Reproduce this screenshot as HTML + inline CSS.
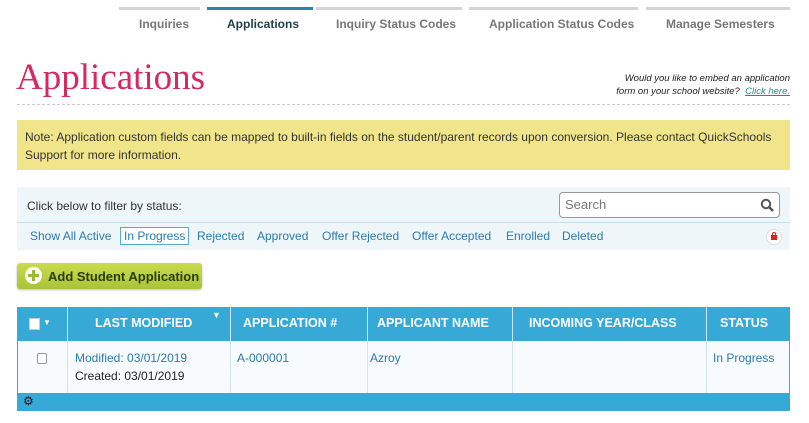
<!DOCTYPE html>
<html><head><style>
body{margin:0;width:809px;height:423px;background:#fff;font-family:"Liberation Sans",sans-serif;position:relative;overflow:hidden}
.a{position:absolute}
.tab{position:absolute;top:7px;height:3px;background:#d4d4d4}
.tt{position:absolute;top:17px;font-size:12px;color:#777;font-weight:bold}
.f{position:absolute;top:229px;font-size:12px;color:#2a7bad;white-space:nowrap}
</style></head><body>
<div class="tab" style="left:119px;width:81px"></div>
<div class="tab" style="left:207px;width:106px;background:#2a84a8"></div>
<div class="tab" style="left:316px;width:146px"></div>
<div class="tab" style="left:469px;width:169px"></div>
<div class="tab" style="left:646px;width:144px"></div>
<div class="tt" style="left:139px">Inquiries</div>
<div class="tt" style="left:227px;color:#1f3f4d">Applications</div>
<div class="tt" style="left:336px">Inquiry Status Codes</div>
<div class="tt" style="left:489px">Application Status Codes</div>
<div class="tt" style="left:666px">Manage Semesters</div>
<div class="a" style="left:16px;top:56px;font-family:'Liberation Serif',serif;font-size:37px;color:#d42a5e">Applications</div>
<div class="a" style="left:560px;top:72px;width:230px;text-align:right;font-size:9.5px;font-style:italic;color:#222;line-height:13px">Would you like to embed an application<br>form on your school website? &nbsp;<span style="color:#2a8a8a;text-decoration:underline">Click here.</span></div>
<div class="a" style="left:17px;top:104px;width:773px;border-top:1px dashed #ccc"></div>
<div class="a" style="left:17px;top:120px;width:757px;height:34px;padding:8px 8px;background:#f1e58c;font-size:12px;line-height:18px;color:#333">Note: Application custom fields can be mapped to built-in fields on the student/parent records upon conversion. Please contact QuickSchools Support for more information.</div>
<div class="a" style="left:17px;top:187px;width:773px;height:63px;background:#eef6fa"></div>
<div class="a" style="left:27px;top:199px;font-size:12px;color:#333">Click below to filter by status:</div>
<div class="a" style="left:559px;top:192px;width:219px;height:24px;border:1px solid #999;border-radius:4px;background:#fff"><span style="position:absolute;left:5px;top:4px;font-size:13px;color:#777">Search</span>
<svg style="position:absolute;right:5px;top:5px" width="14" height="14" viewBox="0 0 14 14"><circle cx="6" cy="6" r="4.2" fill="none" stroke="#555" stroke-width="2"/><path d="M9 9l4 4" stroke="#555" stroke-width="2.5"/></svg></div>
<div class="a" style="left:17px;top:222px;width:773px;border-top:1px solid #bfe0ee"></div>
<div class="f" style="left:30px">Show All Active</div>
<div class="f" style="left:120px;top:227px;border:1px solid #5aa9d4;padding:1px 3px;background:#fff">In Progress</div>
<div class="f" style="left:197px">Rejected</div>
<div class="f" style="left:257px">Approved</div>
<div class="f" style="left:322px">Offer Rejected</div>
<div class="f" style="left:412px">Offer Accepted</div>
<div class="f" style="left:506px">Enrolled</div>
<div class="f" style="left:562px">Deleted</div>
<div class="a" style="left:766px;top:229px;width:14px;height:14px;border-radius:50%;background:#fff;border:1px solid #ddd"><div class="a" style="left:4px;top:5px;width:6px;height:5px;background:#e02020"></div><div class="a" style="left:5px;top:2px;width:2px;height:3px;border:1px solid #e02020;border-bottom:0;border-radius:2px 2px 0 0"></div></div>
<div class="a" style="left:17px;top:263px;width:185px;height:26px;background:linear-gradient(#c8dc4a,#a9c43a);border-radius:3px;box-shadow:0 1px 2px #bbb"></div>
<div class="a" style="left:25px;top:267px;width:17px;height:17px;border-radius:50%;background:#fff"><div class="a" style="left:7px;top:3px;width:3px;height:11px;background:#9bba32"></div><div class="a" style="left:3px;top:7px;width:11px;height:3px;background:#9bba32"></div></div>
<div class="a" style="left:48px;top:269px;font-size:13px;font-weight:bold;color:#2c3a10">Add Student Application</div>
<div class="a" style="left:17px;top:307px;width:773px;height:104px;background:#36a9d6"></div>
<div class="a" style="left:18px;top:341px;width:771px;height:52px;background:#f7fbfd"></div>
<div class="a" style="left:67px;top:307px;height:86px;border-left:1px solid #cfe6f2"></div>
<div class="a" style="left:230px;top:307px;height:86px;border-left:1px solid #cfe6f2"></div>
<div class="a" style="left:367px;top:307px;height:86px;border-left:1px solid #cfe6f2"></div>
<div class="a" style="left:512px;top:307px;height:86px;border-left:1px solid #cfe6f2"></div>
<div class="a" style="left:706px;top:307px;height:86px;border-left:1px solid #cfe6f2"></div>
<div class="a" style="left:29px;top:318px;width:9px;height:10px;background:#fff;border:1px solid #ccc"></div>
<div class="a" style="left:43px;top:318px;color:#fff;font-size:8px">▼</div>
<div class="a" style="left:95px;top:316px;color:#fff;font-weight:bold;font-size:12.5px">LAST MODIFIED</div>
<div class="a" style="left:212px;top:310px;color:#fff;font-size:9px">▼</div>
<div class="a" style="left:243px;top:316px;color:#fff;font-weight:bold;font-size:12.5px">APPLICATION #</div>
<div class="a" style="left:377px;top:316px;color:#fff;font-weight:bold;font-size:12.5px">APPLICANT NAME</div>
<div class="a" style="left:529px;top:316px;color:#fff;font-weight:bold;font-size:12.5px">INCOMING YEAR/CLASS</div>
<div class="a" style="left:720px;top:316px;color:#fff;font-weight:bold;font-size:12.5px">STATUS</div>
<div class="a" style="left:37px;top:353px;width:8px;height:9px;border:1px solid #999;border-radius:2px;background:#fff"></div>
<div class="a" style="left:75px;top:351px;font-size:12px;color:#2a7bad">Modified: 03/01/2019</div>
<div class="a" style="left:75px;top:369px;font-size:12px;color:#222">Created: 03/01/2019</div>
<div class="a" style="left:237px;top:351px;font-size:12px;color:#2a7bad">A-000001</div>
<div class="a" style="left:370px;top:351px;font-size:12px;color:#2a7bad">Azroy</div>
<div class="a" style="left:713px;top:351px;font-size:12px;color:#2a7bad">In Progress</div>
<div class="a" style="left:23px;top:394px;font-size:12px;color:#111">⚙</div>
</body></html>
